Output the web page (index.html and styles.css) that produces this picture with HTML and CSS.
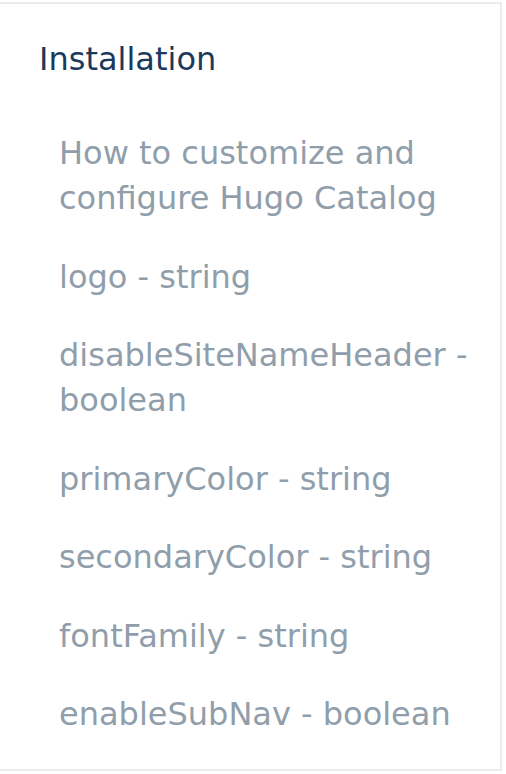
FILE: index.html
```html
<!DOCTYPE html>
<html>
<head>
<meta charset="utf-8">
<link rel="stylesheet" href="styles.css">
</head>
<body>
<nav class="sidebar">
  <h2 class="section-title">Installation</h2>
  <ul class="menu">
    <li class="menu-item">How to customize and configure Hugo Catalog</li>
    <li class="menu-item">logo - string</li>
    <li class="menu-item">disableSiteNameHeader - boolean</li>
    <li class="menu-item">primaryColor - string</li>
    <li class="menu-item">secondaryColor - string</li>
    <li class="menu-item">fontFamily - string</li>
    <li class="menu-item">enableSubNav - boolean</li>
  </ul>
</nav>
</body>
</html>
```
FILE: styles.css
```css
html, body {
  margin: 0;
  padding: 0;
  background: #fff;
}
body {
  font-family: "DejaVu Sans", sans-serif;
  overflow: hidden;
}
.sidebar {
  box-sizing: border-box;
  width: 505px;
  height: 769px;
  margin: 2px 0 0 -3px;
  border: 2px solid #ececec;
  padding: 33px 0 0 40px;
}
.section-title {
  margin: 0;
  font-weight: 400;
  font-size: 32px;
  line-height: 45px;
  color: #1b3a5b;
}
.menu {
  list-style: none;
  margin: 49px 0 0;
  padding: 0 0 0 20px;
}
.menu-item {
  font-size: 32px;
  line-height: 45px;
  color: #909eab;
  margin-bottom: 33.5px;
}
```
